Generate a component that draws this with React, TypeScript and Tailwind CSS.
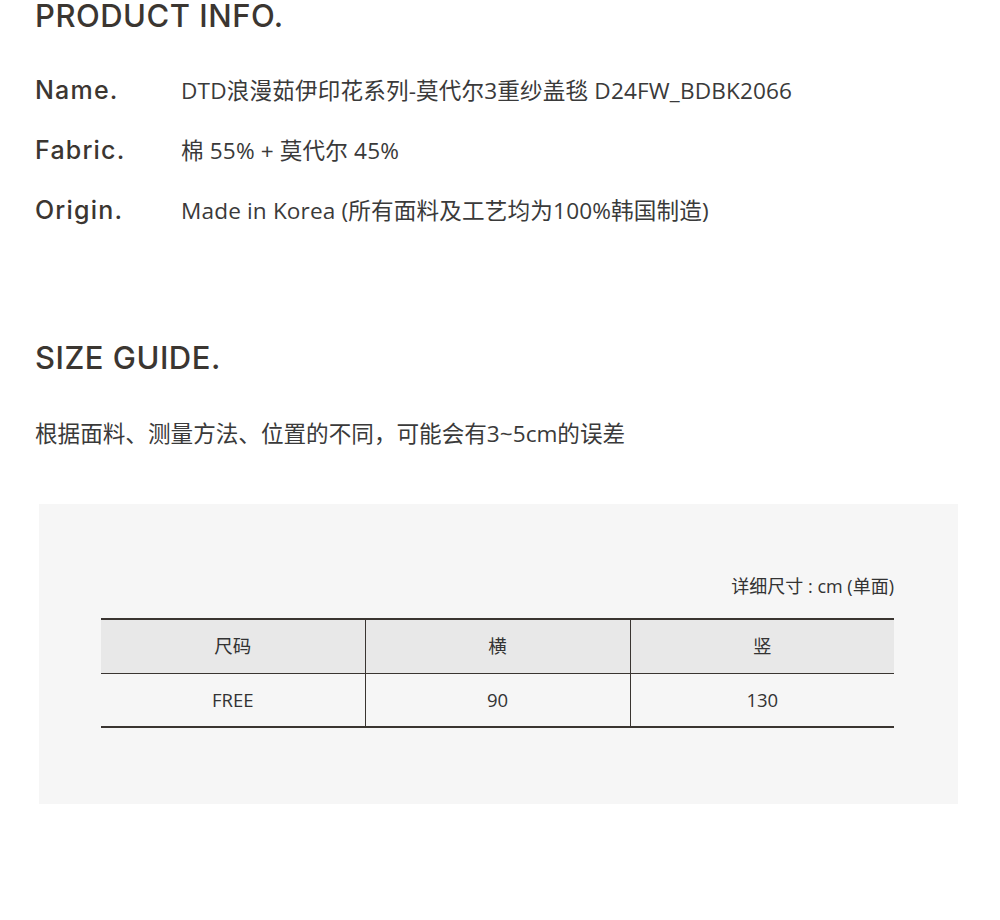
import React from "react";

const cjk = { fontFamily: '"Open Sans", "Noto Sans CJK SC", sans-serif' };
const title = { fontFamily: 'Inter, "Noto Sans", sans-serif' };

export default function App() {
  const rows = [
    ["Name.", "DTD浪漫茹伊印花系列-莫代尔3重纱盖毯 D24FW_BDBK2066"],
    ["Fabric.", "棉 55% + 莫代尔 45%"],
    ["Origin.", "Made in Korea (所有面料及工艺均为100%韩国制造)"],
  ];
  return (
    <div className="w-[1000px] h-[920px] bg-white overflow-hidden text-[#333]">
      <div className="pl-[35px] pr-[42px]">
        <h1 style={title} className="text-[31px] leading-[32px] font-medium text-[#3b3631] tracking-[0.5px]">
          PRODUCT INFO.
        </h1>
        <div className="mt-[41px] flex flex-col gap-[26px]">
          {rows.map(([k, v]) => (
            <div key={k} className="flex items-baseline h-[34px]">
              <div style={title} className="w-[146px] text-[25px] leading-[34px] font-medium text-[#3b3631] tracking-[1.2px]">{k}</div>
              <div style={cjk} className="text-[22.6px] leading-[34px] text-[#3a3a3a] tracking-[0.15px]">{v}</div>
            </div>
          ))}
        </div>
        <h2 style={title} className="mt-[114px] text-[31px] leading-[34px] font-medium text-[#3b3631] tracking-[0.5px]">
          SIZE GUIDE.
        </h2>
        <p style={cjk} className="mt-[44px] text-[22.6px] leading-[30px] text-[#3a3a3a]">
          根据面料、测量方法、位置的不同，可能会有3~5cm的误差
        </p>
      </div>
      <div className="ml-[39px] w-[919px] h-[300px] mt-[55px] bg-[#f6f6f6] pt-[70px] pl-[62px] pr-[64px]">
        <div style={cjk} className="text-right text-[18px] leading-[24px] text-[#333]">详细尺寸 : cm (单面)</div>
        <table style={cjk} className="mt-[20px] w-[793px] border-collapse text-[18.5px] text-[#333]">
          <tbody>
            <tr className="bg-[#e8e8e8] border-t-2 border-[#3a3531] h-[54px]">
              <td className="w-[264px] text-center border-r border-[#3a3531]">尺码</td>
              <td className="w-[265px] text-center border-r border-[#3a3531]">横</td>
              <td className="text-center">竖</td>
            </tr>
            <tr className="border-t border-b-2 border-[#3a3531] h-[54px]">
              <td className="text-center border-r border-[#3a3531]">FREE</td>
              <td className="text-center border-r border-[#3a3531]">90</td>
              <td className="text-center">130</td>
            </tr>
          </tbody>
        </table>
      </div>
    </div>
  );
}
